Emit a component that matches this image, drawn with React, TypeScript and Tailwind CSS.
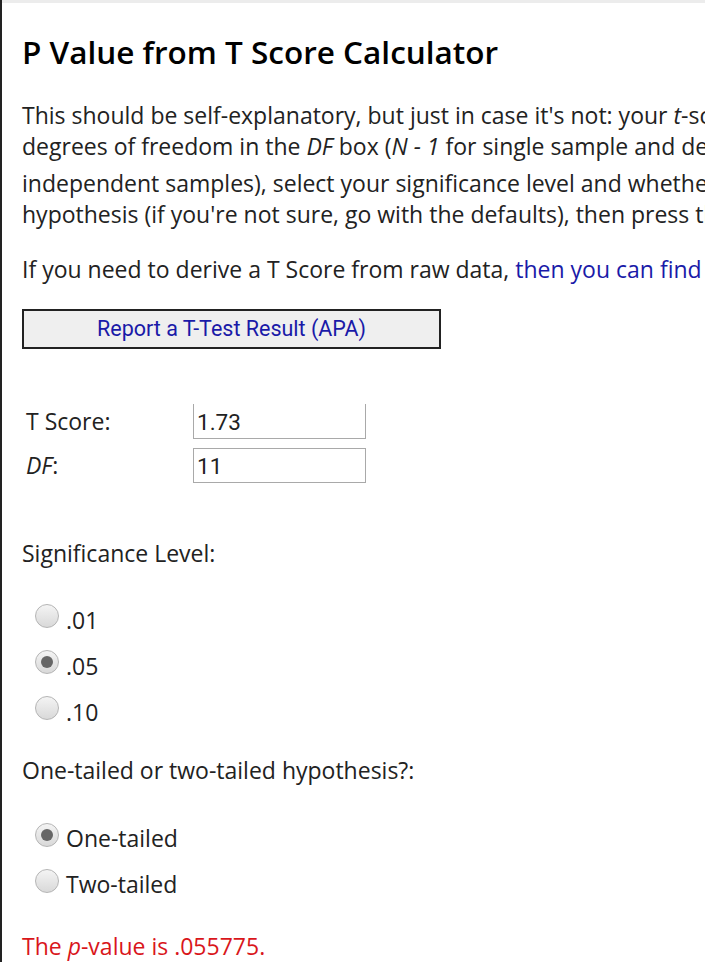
export default function App() {
  const levels = [
    { label: ".01", checked: false },
    { label: ".05", checked: true },
    { label: ".10", checked: false },
  ];
  const tails = [
    { label: "One-tailed", checked: true },
    { label: "Two-tailed", checked: false },
  ];

  const Radio = ({ checked }: { checked: boolean }) => (
    <span className="flex h-[24px] w-[24px] shrink-0 items-center justify-center rounded-full border border-[#b5b5b5] bg-gradient-to-b from-[#f4f4f4] to-[#d9d9d9]">
      {checked && <span className="h-[12px] w-[12px] rounded-full bg-[#666]" />}
    </span>
  );

  return (
    <div className="h-[962px] w-[705px] overflow-hidden border-l-2 border-[#222] bg-white text-[#222]" style={{ fontFamily: '"Open Sans", sans-serif' }}>
      <div className="h-[3px] bg-[#ececec]" />
      <div className="w-[1200px] pl-[20px]">
        <h1 className="pt-[27px] text-[31.5px] font-semibold leading-[44px] text-black">P Value from T Score Calculator</h1>

        <div className="mt-[26px] whitespace-nowrap text-[23px] leading-[31px]">
          <div>
            This should be self-explanatory, but just in case it's not: your <i>t</i>-score goes in the <i>T Score</i> box, you stick your
          </div>
          <div>
            degrees of freedom in the <i>DF</i> box (<i>N - 1</i> for single sample and dependent pairs, (<i>N</i>
            <sub>1</sub> - 1) + (<i>N</i>
            <sub>2</sub> - 1) for
          </div>
          <div className="mt-[6px]">independent samples), select your significance level and whether you're testing a one or two-tailed</div>
          <div>hypothesis (if you're not sure, go with the defaults), then press the button!</div>
        </div>

        <p className="mt-[24px] whitespace-nowrap text-[23px] leading-[31px]">
          If you need to derive a T Score from raw data, <span className="text-[#1a1aa8]">then you can find a t-test calculator here</span>.
        </p>

        <button
          className="mt-[24px] flex h-[40px] w-[419px] items-center justify-center border-2 border-[#222] bg-[#efefef] text-[21.5px] text-[#1a1aa8]"
          style={{ fontFamily: "Roboto, sans-serif" }}
        >
          Report a T-Test Result (APA)
        </button>

        <div className="mt-[55px] flex flex-col gap-[9px] pl-[4px]">
          <div className="flex items-center">
            <span className="w-[167px] text-[23px]">T Score:</span>
            <div className="flex h-[35px] w-[173px] items-center border border-t-0 border-[#a9a9a9] px-[3px] pt-[4px] text-[22.5px]" style={{ fontFamily: "Roboto, sans-serif" }}>
              1.73
            </div>
          </div>
          <div className="flex items-center">
            <span className="w-[167px] text-[23px]">
              <i>DF</i>:
            </span>
            <div className="flex h-[35px] w-[173px] items-center border border-[#a9a9a9] px-[3px] pt-[2px] text-[22.5px]" style={{ fontFamily: "Roboto, sans-serif" }}>
              11
            </div>
          </div>
        </div>

        <p className="mt-[55px] text-[23px] leading-[31px]">Significance Level:</p>
        <div className="mt-[35px] flex flex-col gap-[22px] pl-[13px]">
          {levels.map((l) => (
            <label key={l.label} className="flex h-[24px] items-center gap-[7px] text-[23px]">
              <Radio checked={l.checked} />
              <span className="mt-[9px]">{l.label}</span>
            </label>
          ))}
        </div>

        <p className="mt-[35px] text-[23px] leading-[31px]">One-tailed or two-tailed hypothesis?:</p>
        <div className="mt-[37px] flex flex-col gap-[22px] pl-[13px]">
          {tails.map((t) => (
            <label key={t.label} className="flex h-[24px] items-center gap-[7px] text-[23px]">
              <Radio checked={t.checked} />
              <span className="mt-[7px]">{t.label}</span>
            </label>
          ))}
        </div>

        <p className="mt-[38px] text-[23px] leading-[31px] text-[#d9161b]">
          The <i>p</i>-value is .055775.
        </p>
      </div>
    </div>
  );
}
